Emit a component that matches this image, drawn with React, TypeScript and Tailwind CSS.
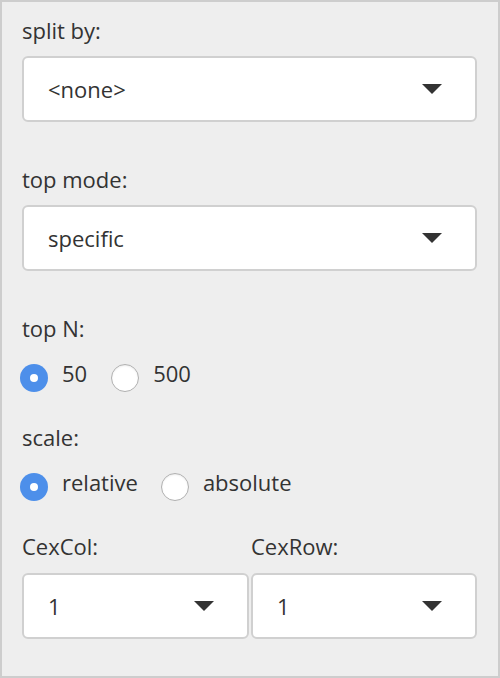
import React from "react";

const Caret = () => (
  <svg width="20" height="10" viewBox="0 0 20 10" className="shrink-0">
    <path d="M0 0 L20 0 L10 10 Z" fill="#333" />
  </svg>
);

const Select = ({ value, className = "" }: { value: string; className?: string }) => (
  <div
    className={`flex h-[66px] items-center justify-between rounded-[6px] border-2 border-[#d0d0d0] bg-white pl-[24px] pr-[33px] ${className}`}
  >
    <span className="leading-[30px]">{value}</span>
    <Caret />
  </div>
);

const Radio = ({ checked }: { checked: boolean }) =>
  checked ? (
    <span className="mt-[6px] flex h-[28px] w-[28px] shrink-0 items-center justify-center rounded-full bg-[#4d8fea]">
      <span className="h-[8px] w-[8px] rounded-full bg-white" />
    </span>
  ) : (
    <span className="mt-[6px] h-[28px] w-[28px] shrink-0 rounded-full border border-[#b0b0b0] bg-white shadow-[inset_0_1px_2px_rgba(0,0,0,0.08)]" />
  );

const RadioItem = ({ label, checked }: { label: string; checked: boolean }) => (
  <div className="flex h-[30px] items-start gap-[14px]">
    <Radio checked={checked} />
    <span className="leading-[30px]">{label}</span>
  </div>
);

export default function App() {
  return (
    <div
      className="h-[678px] w-[500px] border-2 border-[#cdcdcd] bg-[#eeeeee] pl-[20px] pr-[21px] pt-[13px] text-[22px] text-[#333]"
      style={{ fontFamily: "'Open Sans', 'Noto Sans', sans-serif" }}
    >
      <div className="leading-[30px]">split by:</div>
      <Select value="<none>" className="mt-[11px]" />

      <div className="mt-[42px] leading-[30px]">top mode:</div>
      <Select value="specific" className="mt-[11px]" />

      <div className="mt-[42px] leading-[30px]">top N:</div>
      <div className="-ml-[2px] mt-[15px] flex h-[30px] items-start gap-[24px]">
        <RadioItem label="50" checked />
        <RadioItem label="500" checked={false} />
      </div>

      <div className="mt-[34px] leading-[30px]">scale:</div>
      <div className="-ml-[2px] mt-[15px] flex h-[30px] items-start gap-[23px]">
        <RadioItem label="relative" checked />
        <RadioItem label="absolute" checked={false} />
      </div>

      <div className="mt-[34px] flex gap-[2px]">
        <div className="w-[227px]">
          <div className="leading-[30px]">CexCol:</div>
          <Select value="1" className="mt-[12px]" />
        </div>
        <div className="flex-1">
          <div className="leading-[30px]">CexRow:</div>
          <Select value="1" className="mt-[12px]" />
        </div>
      </div>
    </div>
  );
}
